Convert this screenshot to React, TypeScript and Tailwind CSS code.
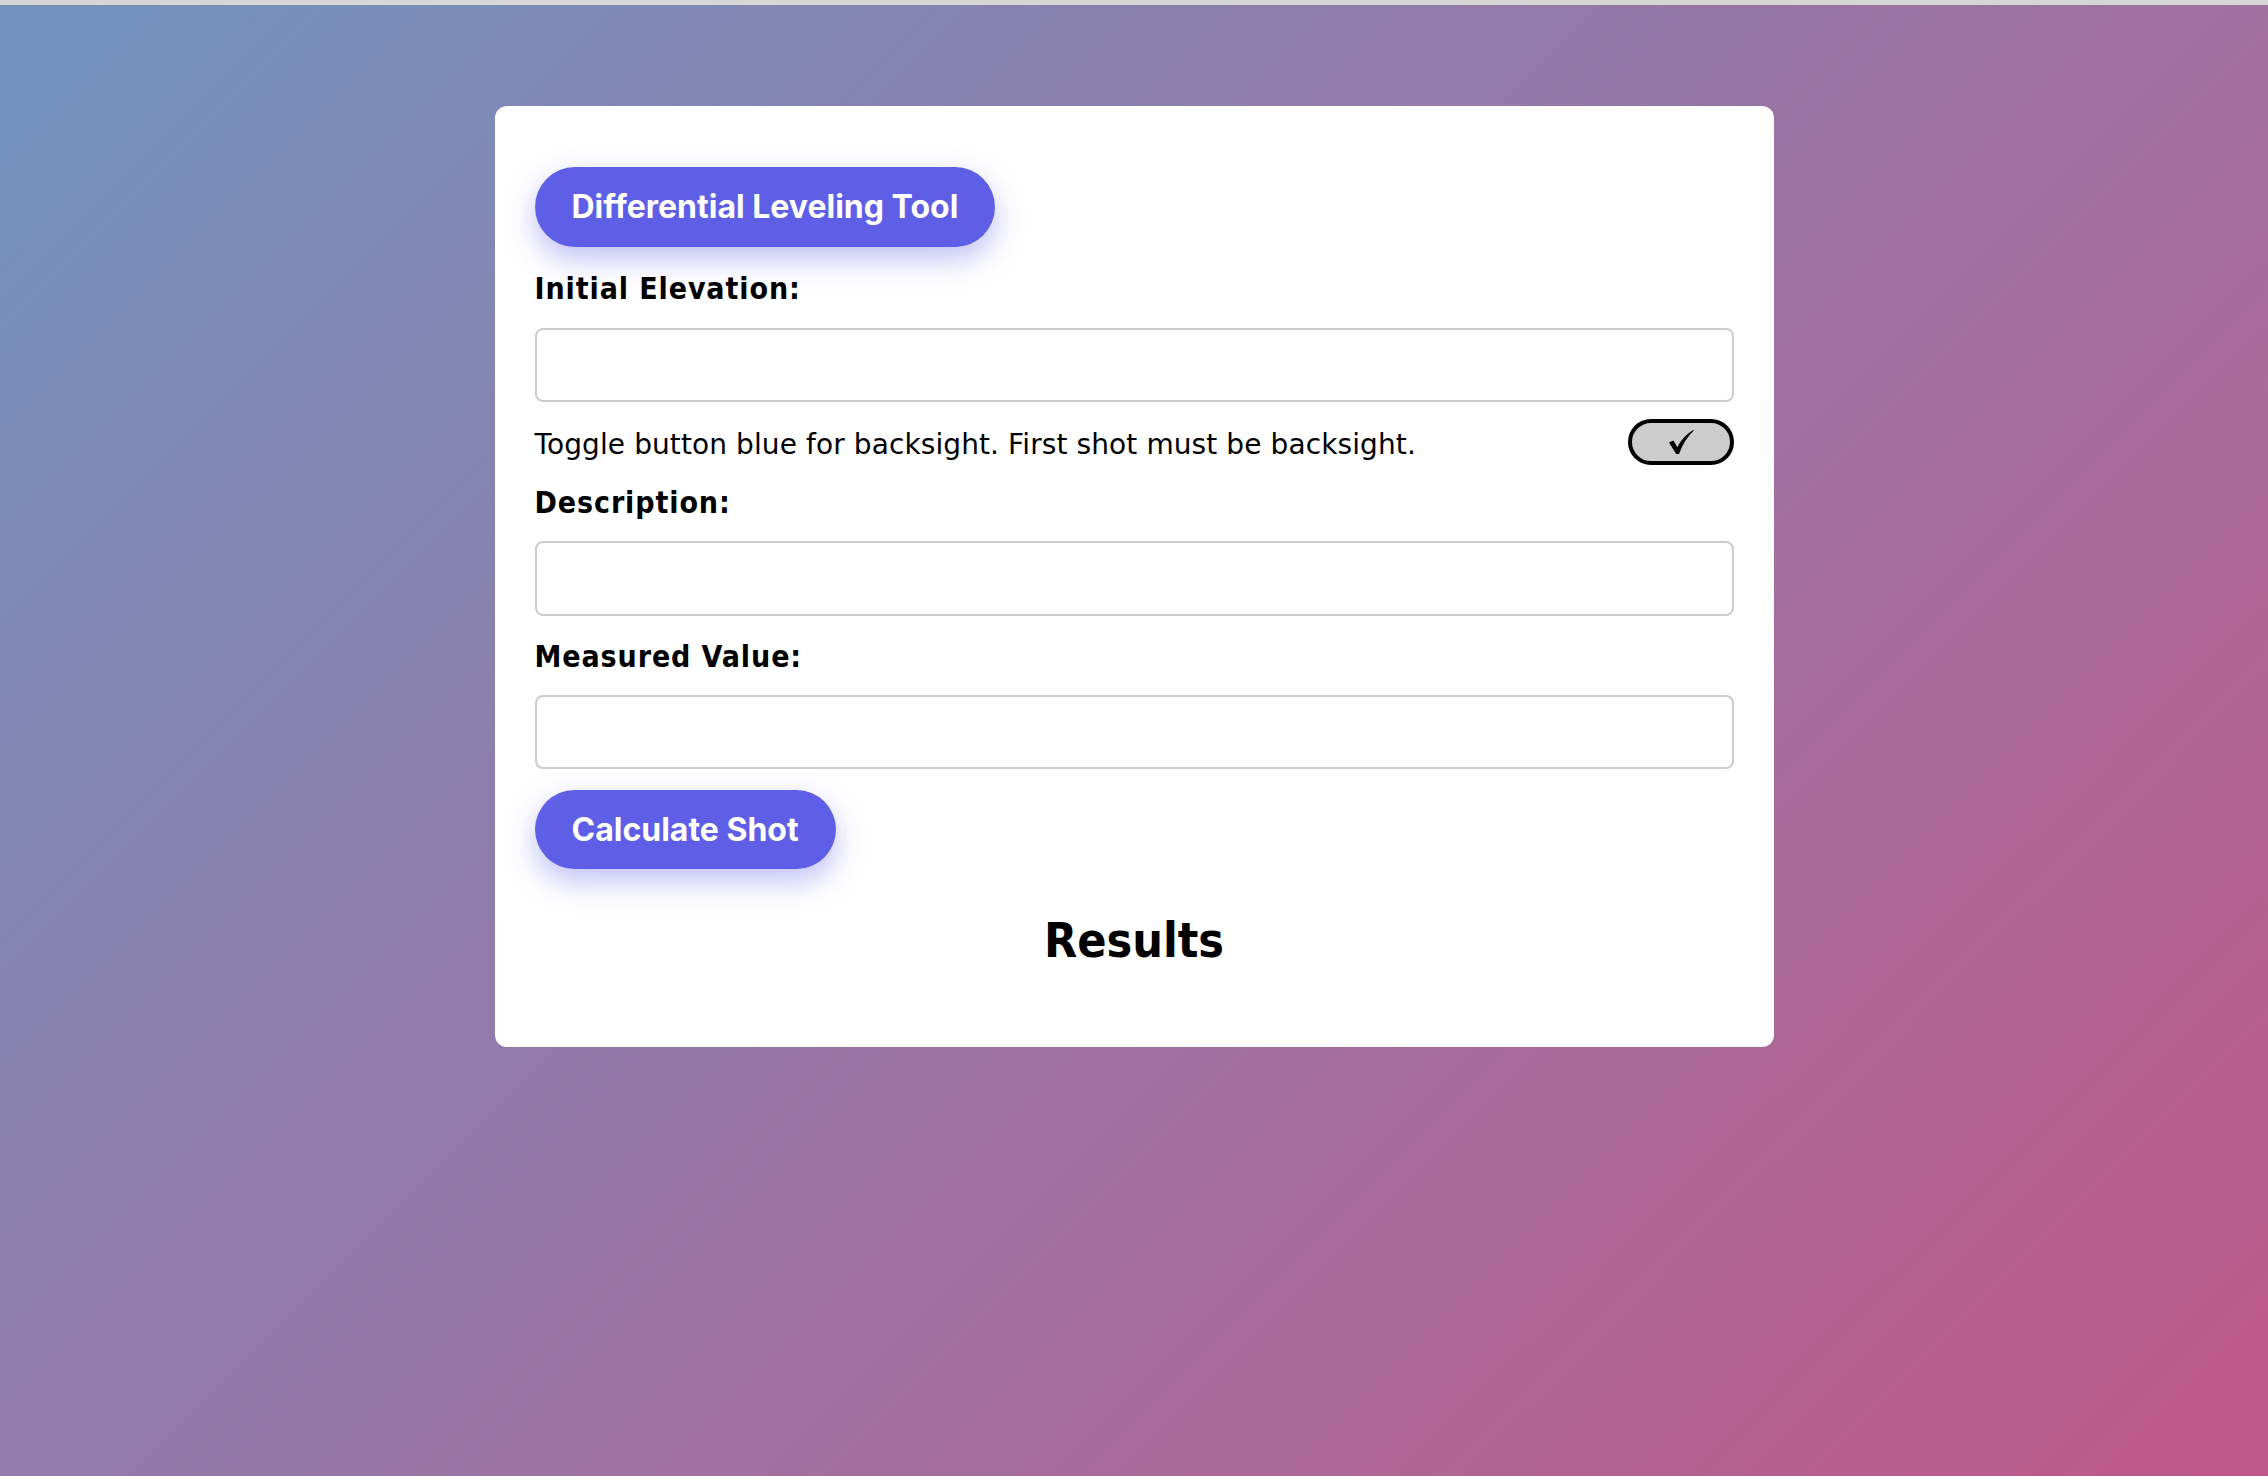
import React from "react";

const tahomaBold = { fontFamily: '"DejaVu Sans Condensed", "DejaVu Sans", sans-serif' };
const tahoma = { fontFamily: '"DejaVu Sans", sans-serif' };
const inter = { fontFamily: 'Inter, "Noto Sans", sans-serif' };

function Label({ children, className = "" }: { children: React.ReactNode; className?: string }) {
  return (
    <label
      style={tahomaBold}
      className={"block text-[30px] leading-[36px] font-bold tracking-[0.9px] text-black " + className}
    >
      {children}
    </label>
  );
}

function Field({ className = "" }: { className?: string }) {
  return (
    <input
      type="text"
      className={
        "block w-full rounded-[8px] border-2 border-[#cccccc] bg-white px-4 outline-none " + className
      }
    />
  );
}

function Check() {
  return (
    <svg width="26" height="26" viewBox="0 0 26 26" aria-hidden="true">
      <path d="M1 13.5 L5.5 11.5 L9.3 18.2 Q14.5 7.5 25.5 0.8 L25.8 1.4 Q16.5 10 11 25 L8.2 25 Z" fill="#000" />
    </svg>
  );
}

export default function App() {
  return (
    <div className="min-h-screen w-full bg-[linear-gradient(135deg,#7293bf_0%,#c0588a_100%)]">
      <div className="h-[5px] w-full bg-[#d6d6d6]" />
      <div className="pt-[101px] pb-[40px]">
        <div className="mx-auto w-[1279px] rounded-[12px] bg-white px-[40px] pt-[61px] pb-[78px]">
          <div className="flex">
            <div
              style={inter}
              className="flex h-[80px] items-center rounded-full bg-[#5e5ee6] px-[37px] text-[32px] font-bold text-white shadow-[0_12px_30px_rgba(94,94,230,0.4)]"
            >
              Differential Leveling Tool
            </div>
          </div>
          <Label className="mt-[24px]">Initial Elevation:</Label>
          <Field className="mt-[21px] h-[74px]" />
          <div className="mt-[17px] flex h-[46px] items-center justify-between">
            <span style={tahoma} className="mt-[5px] text-[28px] leading-[36px] tracking-[0.1px] text-black">
              Toggle button blue for backsight. First shot must be backsight.
            </span>
            <button className="flex h-[46px] w-[106px] items-center justify-center rounded-full border-[4px] border-black bg-[#cccccc]">
              <Check />
            </button>
          </div>
          <Label className="mt-[20px]">Description:</Label>
          <Field className="mt-[20px] h-[75px]" />
          <Label className="mt-[23px]">Measured Value:</Label>
          <Field className="mt-[20px] h-[74px]" />
          <div className="mt-[21px] flex">
            <button
              style={inter}
              className="flex h-[79px] items-center rounded-full bg-[#5e5ee6] px-[37px] text-[32px] font-bold text-white shadow-[0_12px_30px_rgba(94,94,230,0.4)]"
            >
              Calculate Shot
            </button>
          </div>
          <h2 style={tahomaBold} className="mt-[42px] text-center text-[48px] font-bold leading-[58px] text-black">
            Results
          </h2>
        </div>
      </div>
    </div>
  );
}
